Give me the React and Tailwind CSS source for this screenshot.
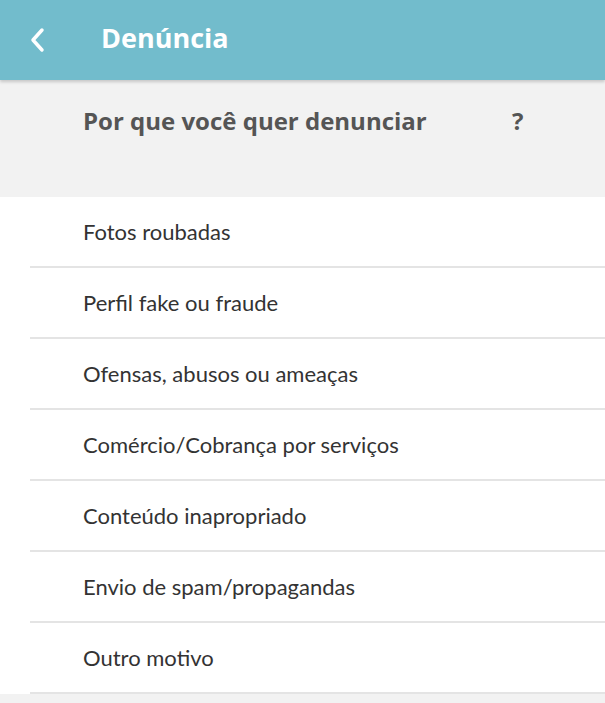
import React from 'react';

const reasons = [
  'Fotos roubadas',
  'Perfil fake ou fraude',
  'Ofensas, abusos ou ameaças',
  'Comércio/Cobrança por serviços',
  'Conteúdo inapropriado',
  'Envio de spam/propagandas',
  'Outro motivo'
];

export default function App() {
  return (
    <div className="min-h-[703px] bg-[#f2f2f2]" style={{ fontFamily: 'Lato, "Noto Sans", sans-serif' }}>
      <header className="relative z-10 h-[80px] bg-[#72bccc] flex items-center shadow-[0_2px_3px_rgba(0,0,0,0.18)]">
        <button className="w-[101px] h-full flex items-center pl-[28px]">
          <svg width="18" height="26" viewBox="0 0 18 26" fill="none">
            <path d="M14 3 L5 13 L14 23" stroke="white" strokeWidth="3.5" strokeLinecap="round" strokeLinejoin="round" />
          </svg>
        </button>
        <h1 className="text-white text-[27px] font-bold -mt-[3px]" style={{ fontFamily: '"Open Sans", sans-serif' }}>Denúncia</h1>
      </header>

      <div className="h-[117px] pl-[83px] pt-[25px]">
        <p className="text-[24px] leading-[32px] font-bold text-[#555555] flex" style={{ fontFamily: '"Open Sans", sans-serif' }}>
          <span className="w-[429px]">Por que você quer denunciar</span>
          <span>?</span>
        </p>
      </div>

      <ul className="bg-white">
        {reasons.map((r) =>
        <li key={r} className="h-[71px] ml-[30px] border-b-[2px] border-[#e4e4e4] flex items-center pl-[53px] text-[22px] text-[#333333]">
            {r}
          </li>
        )}
      </ul>
    </div>);

}
